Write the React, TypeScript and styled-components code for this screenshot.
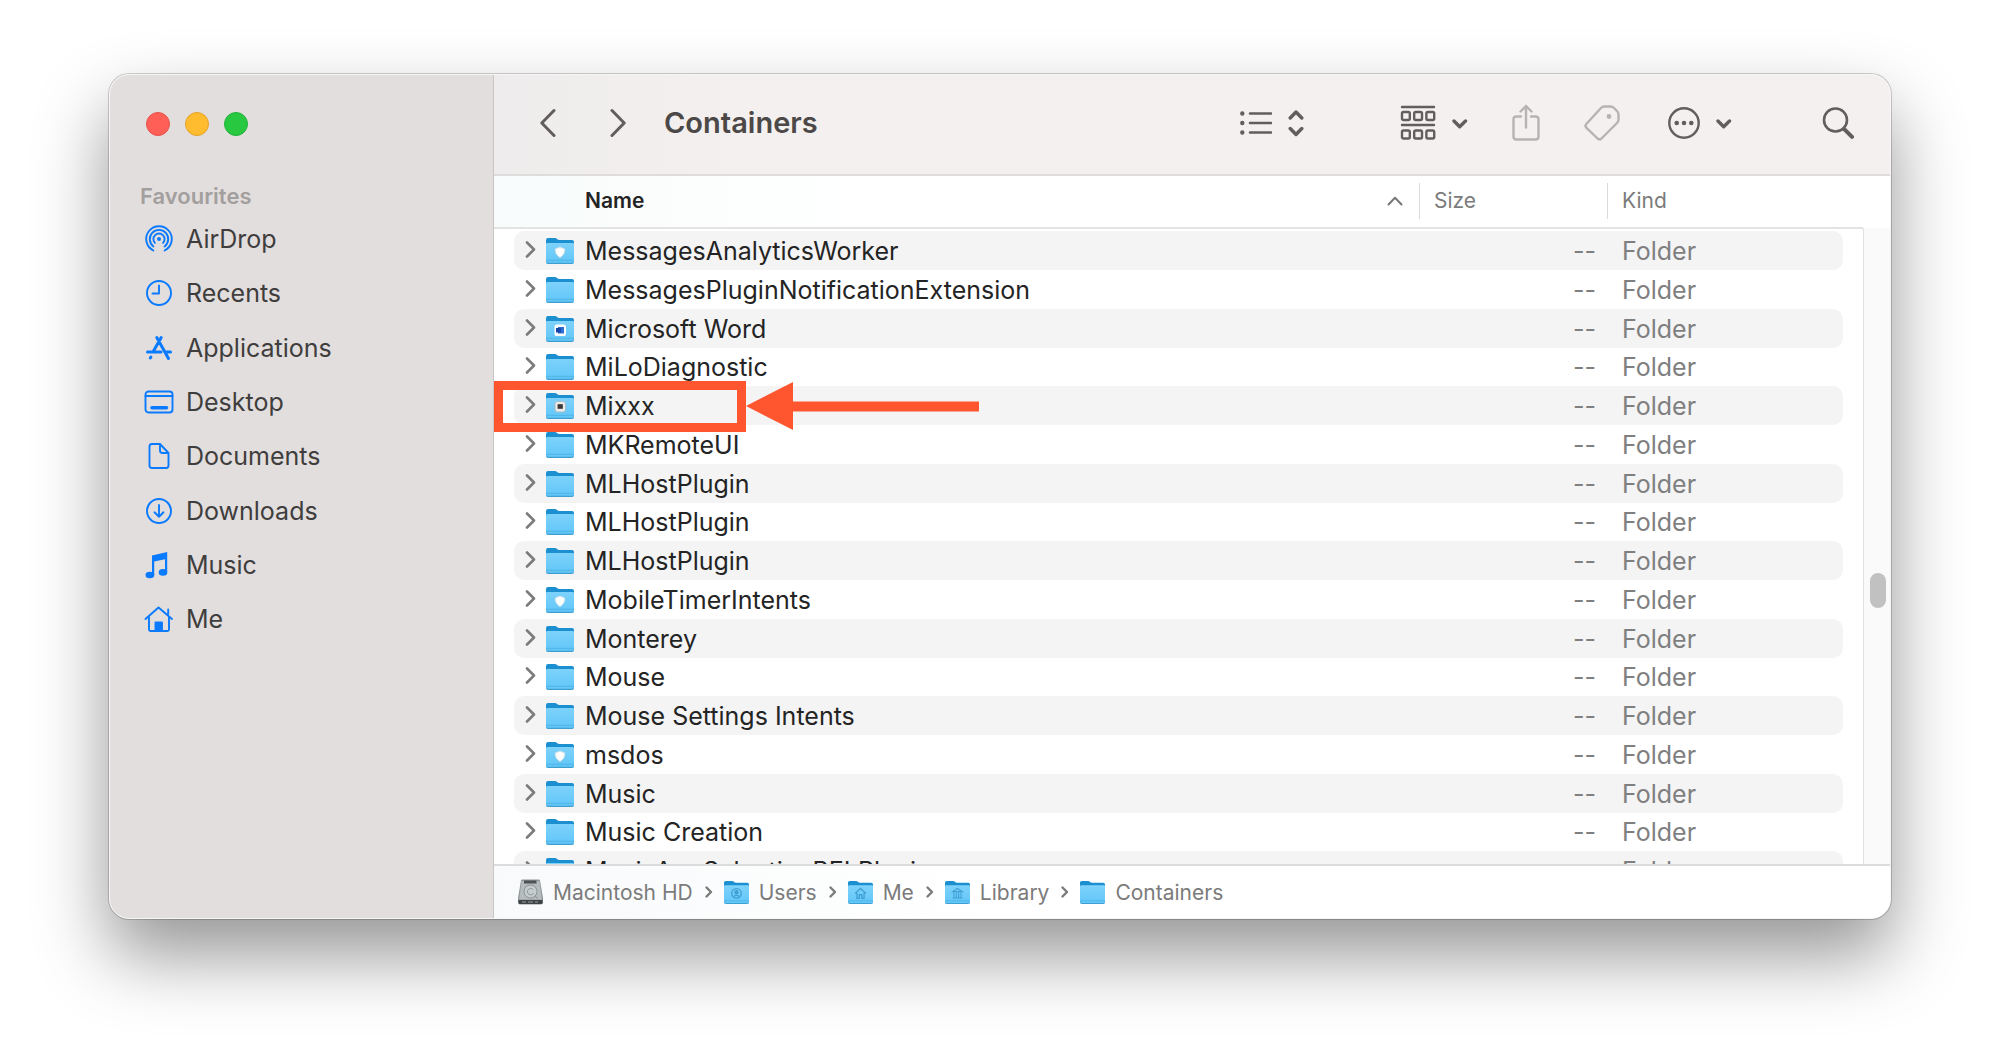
import React from 'react';
import styled, { createGlobalStyle } from 'styled-components';

const GlobalStyle = createGlobalStyle`
  * { box-sizing: border-box; }
  body {
    margin: 0;
    background: #fff;
    font-family: Inter, "Liberation Sans", sans-serif;
    color: #242424;
  }
  button { font: inherit; color: inherit; background: none; border: 0; padding: 0; }
  svg { display: block; flex: none; }
`;

const Desktop = styled.div`
  min-height: 100vh;
  padding: 74px 109px 140px;
  background: #fff;
`;

const Window = styled.div`
  display: flex;
  border: 1px solid #f7f6f6;
  border-radius: 20px;
  overflow: hidden;
  background: #fff;
  box-shadow: 0 0 0 1px rgba(0, 0, 0, 0.18), 0 36px 72px rgba(0, 0, 0, 0.42);
`;

const Sidebar = styled.aside`
  flex: none;
  width: 384px;
  padding: 37px 30px;
  background: #e2dedd;
  border-right: 1px solid #c9c5c4;
`;

const TrafficLights = styled.div`
  display: flex;
  gap: 15px;
  padding: 0 6px;
`;

const Light = styled.button<{ $fill: string; $edge: string }>`
  width: 24px;
  height: 24px;
  border-radius: 50%;
  background: ${(p) => p.$fill};
  border: 1px solid ${(p) => p.$edge};
`;

const SectionTitle = styled.h2`
  margin: 48px 0 0;
  font-size: 22px;
  line-height: 24px;
  font-weight: 600;
  color: #a39f9e;
`;

const Places = styled.ul`
  list-style: none;
  margin: 4px 0 0;
  padding: 0;
`;

const PlaceItem = styled.li`
  height: 54px;
  &:nth-child(3n) { height: 55px; }
`;

const Place = styled.a`
  display: flex;
  align-items: center;
  gap: 12px;
  height: 100%;
  padding-left: 4px;
  font-size: 25px;
  color: #403d3d;
  text-decoration: none;
`;

const Main = styled.main`
  flex: 1;
  min-width: 0;
  display: flex;
  flex-direction: column;
`;

const Toolbar = styled.header`
  display: flex;
  align-items: center;
  height: 101px;
  padding: 0 36px 4px 46px;
  color: #5f5b5a;
  background: linear-gradient(90deg, #eeecec, #f4f0ef 260px);
  border-bottom: 2px solid #dfdcdb;
`;

const Cluster = styled.div<{ $gap: number }>`
  display: flex;
  align-items: center;
  gap: ${(p) => p.$gap}px;
`;

const Title = styled.h1`
  flex: 1;
  margin: 0 0 0 38px;
  font-size: 29px;
  line-height: 36px;
  font-weight: 600;
  color: #4b4847;
`;

const ToolButton = styled.button<{ $dim?: boolean; $after?: number }>`
  display: flex;
  align-items: center;
  gap: 16px;
  margin-right: ${(p) => p.$after ?? 0}px;
  color: ${(p) => (p.$dim ? '#b7b3b2' : '#625e5d')};
`;

const Browser = styled.div`
  display: flex;
  height: 688px;
  overflow: hidden;
`;

const FileTable = styled.table`
  flex: 1;
  display: block;
`;

const Head = styled.thead`
  display: block;
`;

const HeadRow = styled.tr`
  display: grid;
  grid-template-columns: 1fr 188px 236px;
  align-items: center;
  height: 53px;
  padding: 0 20px 2px;
  background: linear-gradient(90deg, #f9fcfc, #fff 400px);
  border-bottom: 2px solid #e3e3e3;
`;

const HeadCell = styled.th<{ $main?: boolean }>`
  display: flex;
  align-items: center;
  justify-content: space-between;
  height: 36px;
  padding: 0 16px 0 ${(p) => (p.$main ? 71 : 14)}px;
  font-size: 21px;
  font-weight: ${(p) => (p.$main ? 600 : 400)};
  color: ${(p) => (p.$main ? '#242424' : '#7b7b7b')};
  border-left: ${(p) => (p.$main ? 0 : 1)}px solid #d9d9d9;
`;

const Body = styled.tbody`
  display: block;
  padding: 2px 20px 0;
`;

const Row = styled.tr`
  position: relative;
  display: grid;
  grid-template-columns: 1fr 188px 236px;
  align-items: center;
  height: 39px;
  border-radius: 10px;
  &:nth-child(odd) { background: #f4f4f5; }
  &:nth-child(4n) { height: 38px; }
`;

const NameCell = styled.td`
  display: flex;
  align-items: center;
  padding: 0 0 0 11px;
  font-size: 25px;
  line-height: 36px;
  white-space: nowrap;
`;

const Disclosure = styled.button`
  margin-right: 10px;
  color: #7c7c7c;
`;

const FileName = styled.span`
  margin-left: 11px;
`;

const MetaCell = styled.td<{ $right?: boolean }>`
  padding: 0 11px 0 15px;
  font-size: 25px;
  line-height: 36px;
  text-align: ${(p) => (p.$right ? 'right' : 'left')};
  color: #7f7f7f;
`;

const Callout = styled.span`
  position: absolute;
  left: -20px;
  top: -5px;
  width: 252px;
  height: 51px;
  border: 9px solid #ff5630;
`;

const CalloutArrow = styled.svg`
  position: absolute;
  left: 232px;
  top: -5px;
`;

const ScrollColumn = styled.div`
  flex: none;
  width: 27px;
  padding-top: 52px;
`;

const ScrollTrack = styled.div`
  height: 100%;
  padding: 345px 4px 0 6px;
  background: #fafafa;
  border-left: 1px solid #e2e2e2;
`;

const ScrollThumb = styled.div`
  height: 35px;
  border-radius: 8px;
  background: #c1c1c1;
`;

const PathBar = styled.nav`
  display: flex;
  align-items: center;
  gap: 10px;
  height: 54px;
  padding: 0 24px;
  font-size: 21px;
  color: #7b7b7b;
  background: linear-gradient(90deg, #f8fafb, #fff 500px);
  border-top: 2px solid #dcdcdc;
`;

const Crumb = styled.a`
  display: flex;
  align-items: center;
  gap: 10px;
  color: inherit;
  text-decoration: none;
`;

type Badge = 'shield' | 'word' | 'mixxx' | 'user' | 'home' | 'library';

function Folder({ badge, size = 28 }: { badge?: Badge; size?: number }) {
  return (
    <svg width={size} height={size} viewBox="0 0 28 28" aria-hidden="true">
      <defs>
        <linearGradient id="front" x1="0" y1="0" x2="0" y2="1">
          <stop offset="0" stopColor="#7dd2fb" />
          <stop offset="1" stopColor="#62c6f8" />
        </linearGradient>
      </defs>
      <path d="M0 3.2Q0 1 2 1h7q1 0 1.800.8l.9.8q.6.4 1.500.4H26q2 0 2 2v6H0z" fill="#1c8fd0" />
      <path d="M0 7.500Q0 6.200 1.400 6.200h25.200Q28 6.200 28 7.500V25q0 2-2 2H2q-2 0-2-2z" fill="#3f9fd0" />
      <path d="M0 7.200Q0 6 1.400 6h25.200Q28 6 28 7.200V24q0 1.800-2 1.800H2Q0 25.800 0 24z" fill="url(#front)" />
      <path d="M0 23.300h28" stroke="#4db4e8" strokeWidth="1" />
      {badge === 'shield' && (
        <path d="M14 10l4.800 1.900q.4 5.600-4.800 8.600-5.200-3-4.800-8.600z" fill="#fdfdfb" stroke="#c5dfe8" strokeWidth=".8" />
      )}
      {badge === 'word' && (
        <>
          <rect x="8.500" y="9.500" width="11.500" height="11.500" rx="2.600" fill="#fff" />
          <rect x="12" y="12" width="6" height="6.500" fill="#2b6fd6" />
          <rect x="10" y="13" width="5" height="4.500" fill="#1746a8" />
        </>
      )}
      {badge === 'mixxx' && (
        <>
          <rect x="9" y="9.500" width="10.500" height="10.500" rx="2.400" fill="#e9eaea" stroke="#a9b6bb" strokeWidth=".8" />
          <rect x="11.600" y="12.200" width="5.200" height="4.600" fill="#3b3634" />
        </>
      )}
      {badge === 'user' && (
        <g fill="none" stroke="#3f9fd4" strokeWidth="1.500">
          <circle cx="14" cy="15" r="5.300" />
          <circle cx="14" cy="13.600" r="1.700" fill="#3f9fd4" />
          <path d="M10.800 18.500q3.200-3 6.400 0" />
        </g>
      )}
      {badge === 'home' && (
        <path d="M8 15.200L14 9.500l6 5.700M10 14.500v6h2.600v-4h2.800v4H18v-6" fill="none" stroke="#3f9fd4" strokeWidth="1.500" />
      )}
      {badge === 'library' && (
        <path d="M8.500 13L14 9.500l5.500 3.500zM10 14v5.500M12.700 14v5.500M15.300 14v5.500M18 14v5.500M8.500 20.200h11" fill="none" stroke="#3f9fd4" strokeWidth="1.200" />
      )}
    </svg>
  );
}

function Drive() {
  return (
    <svg width="25" height="26" viewBox="0 0 25 26" aria-hidden="true">
      <path d="M3 1.500Q3.200.5 4.500.5h16q1.300 0 1.500 1L25 19v4.500q0 2-2 2H2q-2 0-2-2V19z" fill="#8f9699" />
      <path d="M3.500 2h18l2.300 18.500H1.200z" fill="#b4bcbe" />
      <path d="M6 1.500h12.500V4.500H6z" fill="#4d5355" />
      <circle cx="12.500" cy="12.500" r="6.500" fill="#c6cdcf" stroke="#8d9597" />
      <path d="M15 10.500a3.200 3.200 0 1 0 .5 3.500M16 17l4 2" fill="none" stroke="#8d9597" />
      <path d="M.5 21h24v2.500q0 1.500-1.500 1.500H2Q.5 25 .5 23.500z" fill="#3e4345" />
      <path d="M4 23h4M10 23h5M17 23h3" stroke="#9aa1a3" />
    </svg>
  );
}

const Stroke = ({ w, h, sw = 3, children }: { w: number; h: number; sw?: number; children: React.ReactNode }) => (
  <svg width={w} height={h} viewBox={`0 0 ${w} ${h}`} fill="none" stroke="currentColor" strokeWidth={sw} strokeLinecap="round" strokeLinejoin="round" aria-hidden="true">
    {children}
  </svg>
);

const DownChevron = () => (
  <Stroke w={16} h={12} sw={3.4}><path d="M2 4l5.700 5.700L13.500 4" /></Stroke>
);

const PlaceIcon = ({ children }: { children: React.ReactNode }) => (
  <svg width="30" height="30" viewBox="0 0 30 30" fill="none" stroke="#0a7aff" strokeWidth="1.900" strokeLinecap="round" strokeLinejoin="round" aria-hidden="true">
    {children}
  </svg>
);

const places = [
  {
    name: 'AirDrop',
    icon: (
      <>
        <path d="M9.400 26.500A12.800 12.800 0 1 1 20.600 26.500" />
        <path d="M9.400 22.400A9.200 9.200 0 1 1 20.600 22.400" />
        <path d="M10.900 18.900A5.600 5.600 0 1 1 19.100 18.900" />
        <circle cx="15" cy="15" r="2" fill="#0a7aff" stroke="none" />
      </>
    ),
  },
  { name: 'Recents', icon: <><circle cx="15" cy="15" r="12" /><path d="M15 7.500V15.500H8.500" /></> },
  {
    name: 'Applications',
    icon: <g strokeWidth="3"><path d="M12.800 4.500L24.500 25.500M17.200 4.500L9.500 18M3.500 19H17M22 19h4.500M6.300 25l.6-1" /></g>,
  },
  {
    name: 'Desktop',
    icon: <><rect x="1.500" y="4.500" width="27" height="21" rx="3" /><path d="M1.500 9h27" /><path d="M8 20.800h14.500" strokeWidth="3.600" /></>,
  },
  { name: 'Documents', icon: <path d="M16 3H8Q5.500 3 5.500 5.500v19Q5.500 27 8 27h14q2.500 0 2.500-2.500V12L16 3V9.500Q16 12 18.500 12h6" /> },
  { name: 'Downloads', icon: <><circle cx="15" cy="15" r="12" /><path d="M15 9v11.500M10.500 16.300l4.500 4.400 4.500-4.400" /></> },
  {
    name: 'Music',
    icon: (
      <g fill="#0a7aff" stroke="none">
        <path d="M8 5.500L23.200 2v20h-2.200V9.200L10.200 11.600V25H8z" />
        <ellipse cx="5.900" cy="25" rx="4.400" ry="3.300" />
        <ellipse cx="19" cy="22.400" rx="4.300" ry="3.300" />
      </g>
    ),
  },
  {
    name: 'Me',
    icon: <><path d="M1.500 15L14.500 3.500 28 15M5 13v12.500Q5 27 6.500 27h17q1.500 0 1.500-1.500V13M24.200 10V5.500" /><path d="M11.500 27v-8.500h6.500V27z" fill="#0a7aff" /></>,
  },
];

const files: { name: string; badge?: Badge; callout?: boolean }[] = [
  { name: 'MessagesAnalyticsWorker', badge: 'shield' },
  { name: 'MessagesPluginNotificationExtension' },
  { name: 'Microsoft Word', badge: 'word' },
  { name: 'MiLoDiagnostic' },
  { name: 'Mixxx', badge: 'mixxx', callout: true },
  { name: 'MKRemoteUI' },
  { name: 'MLHostPlugin' },
  { name: 'MLHostPlugin' },
  { name: 'MLHostPlugin' },
  { name: 'MobileTimerIntents', badge: 'shield' },
  { name: 'Monterey' },
  { name: 'Mouse' },
  { name: 'Mouse Settings Intents' },
  { name: 'msdos', badge: 'shield' },
  { name: 'Music' },
  { name: 'Music Creation' },
  { name: 'MusicAppSelectionBELPlugin' },
];

const crumbs: { name: string; badge?: Badge; drive?: boolean }[] = [
  { name: 'Macintosh HD', drive: true },
  { name: 'Users', badge: 'user' },
  { name: 'Me', badge: 'home' },
  { name: 'Library', badge: 'library' },
  { name: 'Containers' },
];

export default function App() {
  return (
    <Desktop>
      <GlobalStyle />
      <Window>
        <Sidebar>
          <TrafficLights>
            <Light aria-label="Close" $fill="#ff5f57" $edge="#e5524b" />
            <Light aria-label="Minimise" $fill="#febc2e" $edge="#e2a32c" />
            <Light aria-label="Zoom" $fill="#28c840" $edge="#24b339" />
          </TrafficLights>
          <SectionTitle>Favourites</SectionTitle>
          <Places>
            {places.map((p) => (
              <PlaceItem key={p.name}>
                <Place href="#"><PlaceIcon>{p.icon}</PlaceIcon>{p.name}</Place>
              </PlaceItem>
            ))}
          </Places>
        </Sidebar>
        <Main>
          <Toolbar>
            <Cluster $gap={54}>
              <ToolButton aria-label="Back"><Stroke w={16} h={30}><path d="M14 2.500L1.800 15 14 27.500" /></Stroke></ToolButton>
              <ToolButton aria-label="Forward"><Stroke w={16} h={30}><path d="M2 2.500L14.200 15 2 27.500" /></Stroke></ToolButton>
            </Cluster>
            <Title>Containers</Title>
            <ToolButton aria-label="View as list" $after={96}>
              <Stroke w={32} h={26} sw={2.6}>
                <path d="M10 3.500h21M10 13h21M10 22.500h21" />
                <path d="M2.300 3.500h.01M2.300 13h.01M2.300 22.500h.01" strokeWidth="4.400" />
              </Stroke>
              <Stroke w={16} h={28} sw={3.4}><path d="M2.200 9L8 3l5.800 6M2.200 19.500L8 25.500l5.800-6" /></Stroke>
            </ToolButton>
            <ToolButton aria-label="Group" $after={44}>
              <Stroke w={36} h={36} sw={2.4}>
                <path d="M2 2h32M2 20h32" />
                <rect x="2" y="7" width="7.800" height="8" rx="1.500" />
                <rect x="14.200" y="7" width="7.800" height="8" rx="1.500" />
                <rect x="26.400" y="7" width="7.800" height="8" rx="1.500" />
                <rect x="2" y="25.500" width="7.800" height="8" rx="1.500" />
                <rect x="14.200" y="25.500" width="7.800" height="8" rx="1.500" />
                <rect x="26.400" y="25.500" width="7.800" height="8" rx="1.500" />
              </Stroke>
              <DownChevron />
            </ToolButton>
            <ToolButton aria-label="Share" $dim $after={44}>
              <Stroke w={28} h={38} sw={2.4}>
                <path d="M9 12.500H4.500Q1.500 12.500 1.500 15.500v17q0 3 3 3h19q3 0 3-3v-17q0-3-3-3H19M14 23.500V2M8.500 7.500L14 2l5.500 5.500" />
              </Stroke>
            </ToolButton>
            <ToolButton aria-label="Tags" $dim $after={48}>
              <Stroke w={36} h={36} sw={2.4}>
                <path d="M20 1.500h6.500Q28.500 1.500 30 3l3 3q1.500 1.500 1.500 3.500V14.500q0 2-1.500 3.500L17.500 33.500q-2 1.700-4 0L2.500 22.800q-2-2 0-4L17 3q1.400-1.500 3-1.500z" />
                <circle cx="25" cy="11.500" r="1.200" fill="currentColor" />
              </Stroke>
            </ToolButton>
            <ToolButton aria-label="More" $after={90}>
              <Stroke w={32} h={32} sw={2.4}>
                <circle cx="16" cy="16" r="14.700" />
                <path d="M8.700 16h.01M16 16h.01M23.300 16h.01" strokeWidth="4.600" />
              </Stroke>
              <DownChevron />
            </ToolButton>
            <ToolButton aria-label="Search">
              <Stroke w={32} h={32} sw={2.6}>
                <circle cx="13.500" cy="13" r="11.500" />
                <path d="M22 21.800l8 8" strokeWidth="4" />
              </Stroke>
            </ToolButton>
          </Toolbar>
          <Browser>
            <FileTable>
              <Head>
                <HeadRow>
                  <HeadCell scope="col" $main>
                    Name
                    <Stroke w={16} h={10} sw={2}><path d="M1.500 8.500L8 1.800l6.500 6.700" stroke="#777" /></Stroke>
                  </HeadCell>
                  <HeadCell scope="col">Size</HeadCell>
                  <HeadCell scope="col">Kind</HeadCell>
                </HeadRow>
              </Head>
              <Body>
                {files.map((f, i) => (
                  <Row key={i}>
                    <NameCell>
                      <Disclosure aria-label={`Expand ${f.name}`}>
                        <Stroke w={11} h={20} sw={2.6}><path d="M2 1.500L9 8.500l-7 7" /></Stroke>
                      </Disclosure>
                      <Folder badge={f.badge} />
                      <FileName>{f.name}</FileName>
                      {f.callout && (
                        <>
                          <Callout />
                          <CalloutArrow width="233" height="51" viewBox="0 0 233 51">
                            <path d="M0 25L47 1v19.500H233v10H47V49z" fill="#ff5630" />
                          </CalloutArrow>
                        </>
                      )}
                    </NameCell>
                    <MetaCell $right>--</MetaCell>
                    <MetaCell>Folder</MetaCell>
                  </Row>
                ))}
              </Body>
            </FileTable>
            <ScrollColumn>
              <ScrollTrack><ScrollThumb /></ScrollTrack>
            </ScrollColumn>
          </Browser>
          <PathBar aria-label="Path">
            {crumbs.map((c, i) => (
              <React.Fragment key={c.name}>
                {i > 0 && <Stroke w={11} h={14} sw={2.4}><path d="M3.500 2.500L8 7l-4.500 4.500" /></Stroke>}
                <Crumb href="#">{c.drive ? <Drive /> : <Folder badge={c.badge} size={25} />}{c.name}</Crumb>
              </React.Fragment>
            ))}
          </PathBar>
        </Main>
      </Window>
    </Desktop>
  );
}
